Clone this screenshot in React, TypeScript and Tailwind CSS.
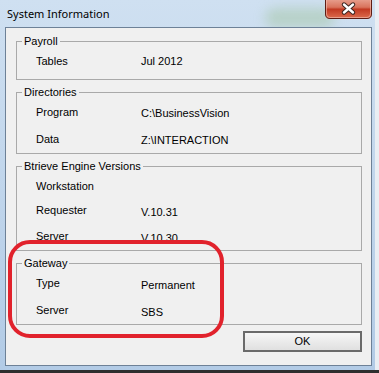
import { ReactNode } from "react";

interface Row {
  label: string;
  value?: string;
}

interface GroupProps {
  title: string;
  rows: Row[];
  height: string;
  gap: string;
  valueOffset: string;
}

function Group({ title, rows, height, gap, valueOffset }: GroupProps) {
  return (
    <fieldset className={`w-[346px] border border-[#a9a9a9] ${height}`}>
      <legend className="ml-[5px] px-[2px] leading-[13px]">{title}</legend>
      <div className={`flex flex-col pl-[19px] pt-[7px] ${gap}`}>
        {rows.map(({ label, value }) => (
          <div key={label} className="flex items-start leading-[13px]">
            <span className="w-[105px]">{label}</span>
            {value && <span className={valueOffset}>{value}</span>}
          </div>
        ))}
      </div>
    </fieldset>
  );
}

// Aero close button, drawn as one small picture
function CloseButton() {
  return (
    <svg width="47" height="19" viewBox="0 0 47 19" className="block">
      <defs>
        <linearGradient id="closeFill" x1="0" y1="0" x2="0" y2="1">
          <stop offset="0" stopColor="#eaa796" />
          <stop offset="0.45" stopColor="#d9735c" />
          <stop offset="0.55" stopColor="#c23a22" />
          <stop offset="1" stopColor="#dd6d4e" />
        </linearGradient>
      </defs>
      <path d="M0.5 -2 V14 Q0.5 18.5 5 18.5 H42 Q46.5 18.5 46.5 14 V-2 Z" fill="url(#closeFill)" stroke="#5e1d14" />
      <path d="M1.5 -2 V14 Q1.5 17.5 5 17.5 H42 Q45.5 17.5 45.5 14 V-2" fill="none" stroke="#f4c3b6" strokeOpacity="0.6" />
      <path d="M19 4.5 L28 12.5 M28 4.5 L19 12.5" stroke="#3b2420" strokeWidth="4.4" strokeLinecap="round" />
      <path d="M19 4.5 L28 12.5 M28 4.5 L19 12.5" stroke="#ffffff" strokeWidth="2.4" strokeLinecap="round" />
    </svg>
  );
}

function Frame({ children }: { children: ReactNode }) {
  return (
    <div className="relative flex h-[370px] w-[375px] flex-col overflow-hidden bg-[#c0d6ec] bg-linear-to-b from-[#cfe0f1] to-[#b2cbe6]">
      <div className="pointer-events-none absolute left-[265px] top-[8px] h-[20px] w-[70px] rounded-full bg-[#a9c9ae] opacity-60 blur-[6px]" />
      <div className="relative flex h-[27px] items-start">
        <span className="mt-[6px] ml-[7px] font-['Noto_Sans',sans-serif] text-[11px] leading-[15px] text-black">
          System Information
        </span>
        <div className="ml-auto mr-[3px]">
          <CloseButton />
        </div>
      </div>
      <div className="relative ml-[5px] h-[339px] w-[367px] border border-[#6d8197] bg-[#f0f0f0]">
        {children}
      </div>
    </div>
  );
}

export default function App() {
  return (
    <div className="flex h-[373px] w-[379px] flex-col overflow-hidden bg-[#2e2e2e] font-['Liberation_Sans',Arial,sans-serif] text-[11px] text-black">
      <div className="flex">
        <Frame>
          <div className="flex flex-col gap-[6px] pl-[10px] pt-[7px]">
            <Group
              title="Payroll"
              rows={[{ label: "Tables", value: "Jul 2012" }]}
              height="h-[45px]"
              gap="gap-[13px]"
              valueOffset=""
            />
            <Group
              title="Directories"
              rows={[
                { label: "Program", value: "C:\\BusinessVision" },
                { label: "Data", value: "Z:\\INTERACTION" },
              ]}
              height="h-[68px]"
              gap="gap-[13px]"
              valueOffset="pt-[1px]"
            />
            <Group
              title="Btrieve Engine Versions"
              rows={[
                { label: "Workstation" },
                { label: "Requester", value: "V.10.31" },
                { label: "Server", value: "V.10.30" },
              ]}
              height="h-[91px]"
              gap="gap-[11px]"
              valueOffset="pt-[2px]"
            />
            <Group
              title="Gateway"
              rows={[
                { label: "Type", value: "Permanent" },
                { label: "Server", value: "SBS" },
              ]}
              height="h-[68px]"
              gap="gap-[12px]"
              valueOffset="pt-[2px]"
            />
            <div className="flex w-[346px] justify-end">
              <button className="h-[21px] w-[119px] border-2 border-[#6a6a6a] bg-[#ececec] bg-linear-to-b from-[#f6f6f6] to-[#e0e0e0] leading-[13px]">
                OK
              </button>
            </div>
          </div>
          <div className="pointer-events-none absolute left-[2px] top-[212px] h-[98px] w-[216px] rounded-[22px] border-4 border-[#e1222c]" />
        </Frame>
        <div className="h-[370px] w-[4px] bg-[#e9eef3]" />
      </div>
    </div>
  );
}
